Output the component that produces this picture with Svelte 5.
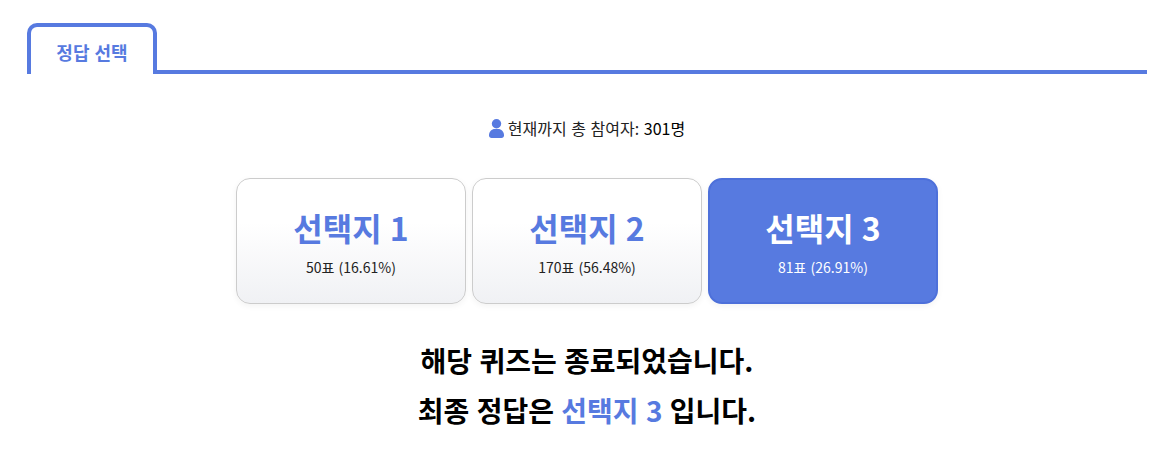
<script>
  const choices = [
    { name: "선택지 1", votes: 50, pct: "16.61" },
    { name: "선택지 2", votes: 170, pct: "56.48" },
    { name: "선택지 3", votes: 81, pct: "26.91", answer: true },
  ];
</script>

<div class="page">
  <div class="tabs">
    <div class="tab">정답 선택</div>
  </div>

  <p class="count">
    <svg class="user" viewBox="0 0 15 19" aria-hidden="true">
      <circle cx="7.5" cy="4.8" r="4.7" />
      <path d="M0 16.200C0 12.600 2.600 9.900 6 9.900h3c3.400 0 6 2.700 6 6.300 0 1.700-1 2.700-2.600 2.700H2.600C1 18.900 0 17.900 0 16.200z" />
    </svg>
    <span>현재까지 총 참여자: <span class="num">301명</span></span>
  </p>

  <div class="choices">
    {#each choices as c}
      <div class="choice" class:answer={c.answer}>
        <div class="name">{c.name}</div>
        <div class="votes">{c.votes}표 ({c.pct}%)</div>
      </div>
    {/each}
  </div>

  <div class="result">
    <p>해당 퀴즈는 종료되었습니다.</p>
    <p>최종 정답은 <span class="hl">선택지 3</span> 입니다.</p>
  </div>
</div>

<style>
  :global(body) {
    background: #fff;
  }

  .page {
    padding: 23px 26px 0 27px;
    font-family: "Noto Sans CJK KR", "Noto Sans", sans-serif;
    word-spacing: 0.0625em;
    color: #000;
  }

  .tabs {
    height: 51px;
    box-sizing: border-box;
    border-bottom: 4px solid #577ae0;
  }

  .tab {
    width: 130px;
    height: 51px;
    box-sizing: border-box;
    border: 4px solid #577ae0;
    border-bottom: none;
    border-radius: 10px 10px 0 0;
    background: #fff;
    color: #577ae0;
    font-size: 18px;
    font-weight: 700;
    line-height: 50px;
    text-align: center;
  }

  .count {
    margin: 42px 0 0;
    display: flex;
    justify-content: center;
    align-items: center;
    gap: 4px;
    height: 24px;
    font-size: 16px;
    line-height: 24px;
    color: #222;
    white-space: pre;
  }

  .user {
    width: 15px;
    height: 19px;
    fill: #577ae0;
  }

  .num {
    color: #000;
  }

  .choices {
    display: flex;
    justify-content: center;
    gap: 6px;
    margin-top: 38px;
  }

  .choice {
    width: 230px;
    height: 126px;
    box-sizing: border-box;
    border: 1px solid #cccccc;
    border-radius: 14px;
    background: linear-gradient(to bottom, #ffffff 35%, #f0f1f4 100%);
    box-shadow: 0 2px 6px rgba(0, 0, 0, 0.05);
    text-align: center;
    color: #222;
  }

  .choice.answer {
    background: #577ae0;
    border: 2px solid #4d70da;
    color: #fff;
  }

  .name {
    margin-top: 24px;
    font-size: 32px;
    font-weight: 700;
    line-height: 48px;
    color: #577ae0;
  }

  .answer .name {
    margin-top: 23px;
    color: #fff;
  }

  .votes {
    margin-top: 6px;
    font-size: 14px;
    line-height: 20px;
  }

  .result {
    margin-top: 31px;
    text-align: center;
    font-size: 28px;
    font-weight: 700;
    line-height: 50px;
  }

  .result p {
    margin: 0;
  }

  .hl {
    color: #577ae0;
  }
</style>
